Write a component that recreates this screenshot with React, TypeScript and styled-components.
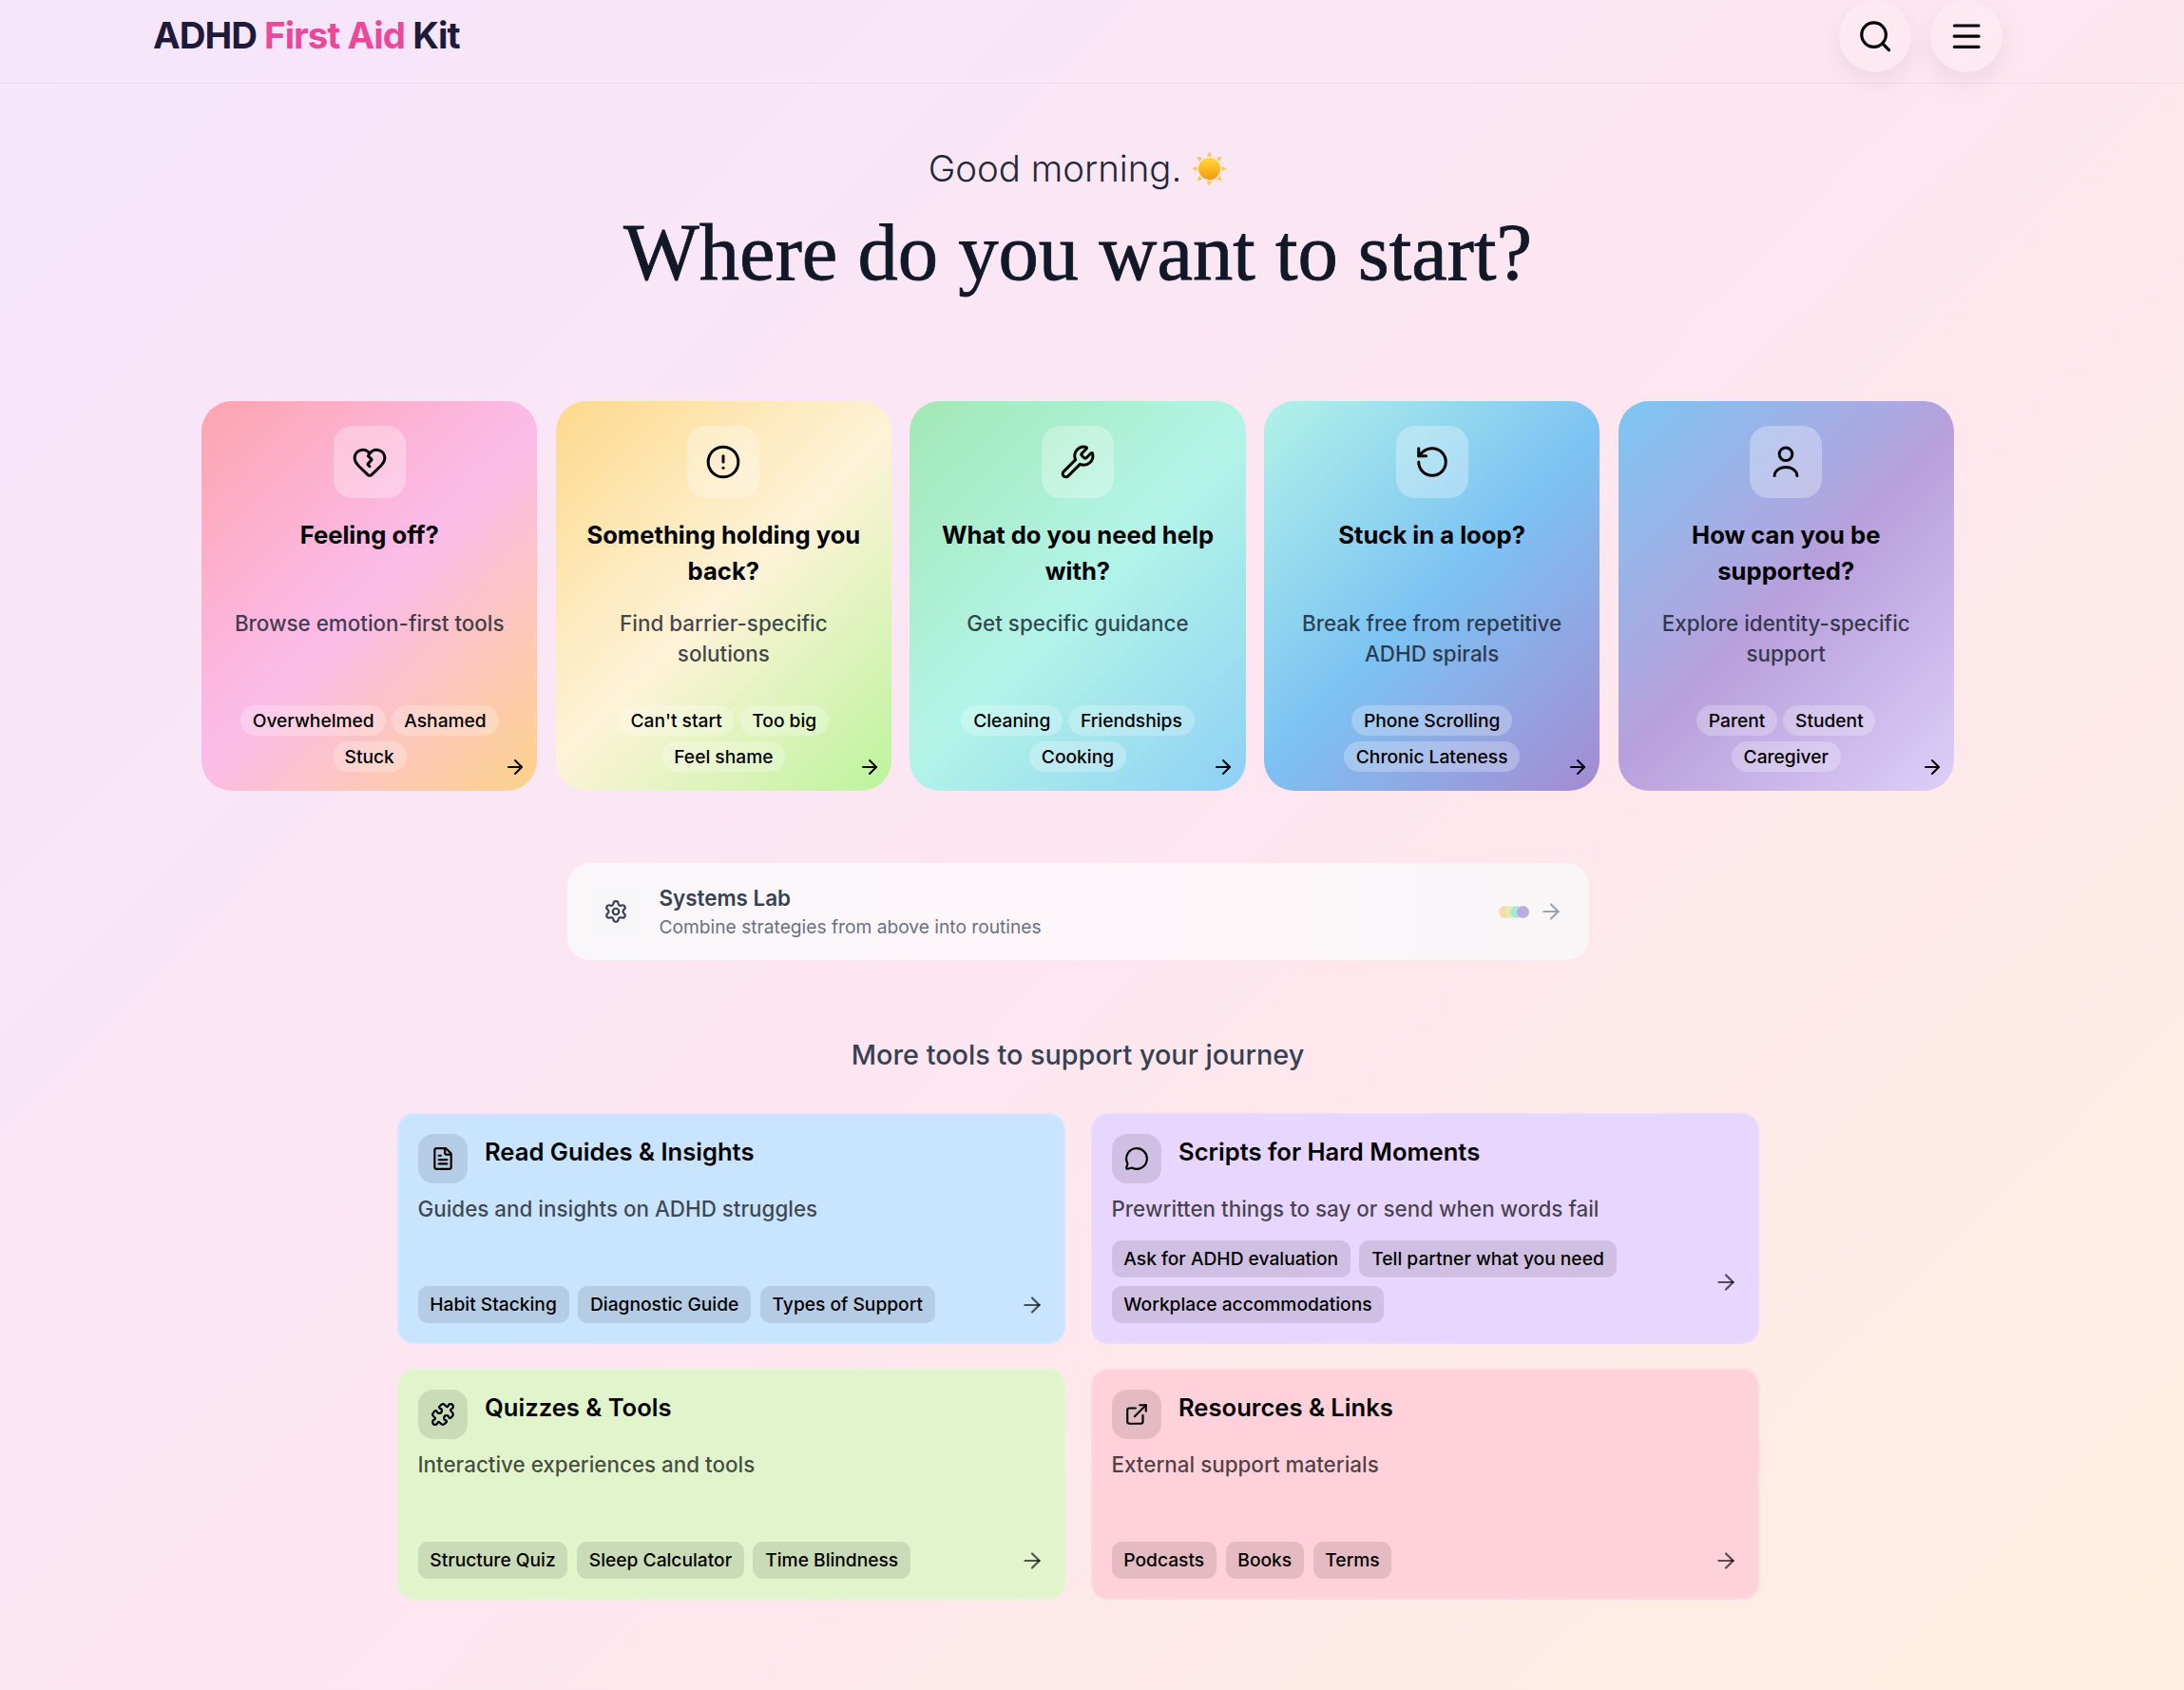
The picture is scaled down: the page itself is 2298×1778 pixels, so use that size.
import React from "react";
import styled, { createGlobalStyle } from "styled-components";
import {
  ArrowRight, CircleAlert, ExternalLink, FileText, HeartCrack, Menu, MessageCircle,
  Puzzle, RotateCcw, Search, Settings, Wrench,
} from "lucide-react";

const Global = createGlobalStyle`
  html, body { margin: 0; padding: 0; }
  body { font-family: Inter, "Liberation Sans", sans-serif; color: #000; }
  * { box-sizing: border-box; }
`;

const Page = styled.div`
  min-height: 1778px;
  padding-right: 30px;
  background: linear-gradient(135deg, #f5e6fb 0%, #fde6f1 50%, #ffeedf 100%);
`;
const Nav = styled.header`
  height: 88px;
  padding: 0 161px 11px;
  display: flex;
  align-items: center;
  justify-content: space-between;
  margin-right: -30px;
  padding-right: 191px;
  border-bottom: 1px solid rgba(0, 0, 0, 0.04);
`;
const Logo = styled.div`
  margin-top: -2px;
  font-size: 38.4px;
  font-weight: 700;
  letter-spacing: -0.96px;
  color: #1e1b3a;
`;
const Pink = styled.span`color: #ec4899;`;
const NavActions = styled.div`display: flex; gap: 20px;`;
const RoundButton = styled.button`
  width: 76px;
  height: 76px;
  border: 0;
  padding: 0;
  border-radius: 50%;
  display: flex;
  align-items: center;
  justify-content: center;
  color: #000;
  background: rgba(255, 255, 255, 0.12);
  box-shadow: 0 10px 24px rgba(60, 20, 70, 0.07);
`;
const Hero = styled.section`
  padding-top: 64px;
  text-align: center;
`;
const Greeting = styled.p`
  margin: 0;
  height: 50px;
  display: flex;
  align-items: center;
  justify-content: center;
  gap: 11px;
  font-size: 38.4px;
  font-weight: 300;
  color: #1f2937;
`;
const Heading = styled.h1`
  margin: 19px 0 0;
  font-family: "Liberation Serif", serif;
  font-size: 84.6px;
  line-height: 90px;
  font-weight: 400;
  color: #111827;
  -webkit-text-stroke: 0.8px #111827;
`;
const CardRow = styled.div`
  width: 1844px;
  margin: 111px auto 0;
  display: grid;
  grid-template-columns: repeat(5, 1fr);
  gap: 19.2px;
`;
const Card = styled.article<{ $bg: string }>`
  position: relative;
  height: 410px;
  padding: 26px 24px 20px;
  border-radius: 32px;
  display: flex;
  flex-direction: column;
  align-items: center;
  text-align: center;
  background: ${(p) => p.$bg};
`;
const CardIcon = styled.div`
  width: 76px;
  height: 76px;
  flex: none;
  border-radius: 20px;
  display: flex;
  align-items: center;
  justify-content: center;
  background: rgba(255, 255, 255, 0.3);
`;
const CardTitle = styled.h2`
  margin: 20px 0 0;
  min-height: 76px;
  font-size: 25.6px;
  line-height: 38px;
  font-weight: 700;
  color: #000;
`;
const CardDesc = styled.p`
  margin: 20px 0 0;
  font-size: 22.4px;
  line-height: 32px;
  font-weight: 500;
  color: rgba(17, 24, 39, 0.8);
`;
const Pills = styled.div`
  margin-top: auto;
  display: flex;
  flex-wrap: wrap;
  justify-content: center;
  gap: 6px;
`;
const Pill = styled.span`
  height: 32px;
  padding: 0 12.8px;
  border-radius: 16px;
  font-size: 19.2px;
  line-height: 32px;
  font-weight: 500;
  color: #000;
  background: rgba(255, 255, 255, 0.25);
`;
const CardArrow = styled.span`
  position: absolute;
  right: 11.5px;
  bottom: 13px;
  display: flex;
`;
const Lab = styled.section`
  width: 1075px;
  height: 102px;
  margin: 76px auto 0;
  padding: 0 27px 0 25px;
  display: flex;
  align-items: center;
  border-radius: 24px;
  background: linear-gradient(90deg, #f9f7fa 0%, #fdf6fa 40%, #fcf6f9 70%, #f9f6f8 100%);
`;
const LabIcon = styled.div`
  width: 52px;
  height: 52px;
  margin-right: 20px;
  border-radius: 14px;
  display: flex;
  align-items: center;
  justify-content: center;
  color: #374151;
  background: rgba(243, 244, 246, 0.4);
`;
const LabText = styled.div`flex: 1;`;
const LabTitle = styled.div`
  font-size: 22.4px;
  line-height: 33px;
  font-weight: 600;
  color: #374151;
`;
const LabSub = styled.div`
  font-size: 19.2px;
  line-height: 29px;
  color: #6b7280;
`;
const Dots = styled.div`
  display: flex;
  margin-right: 10px;
`;
const Dot = styled.span<{ $c: string }>`
  width: 13px;
  height: 13px;
  margin-left: -6.7px;
  border-radius: 50%;
  background: ${(p) => p.$c};
  opacity: 0.9;
`;
const LabArrow = styled.span`
  display: flex;
  color: #9ca3af;
`;
const MoreTitle = styled.h3`
  margin: 78px 0 0;
  text-align: center;
  font-size: 28.8px;
  line-height: 44px;
  font-weight: 500;
  color: #374151;
`;
const ToolGrid = styled.div`
  width: 1433px;
  margin: 39px auto 0;
  display: grid;
  grid-template-columns: repeat(2, 1fr);
  gap: 26px 27px;
`;
const Tool = styled.article<{ $bg: string }>`
  height: 243px;
  padding: 20px;
  border: 2px solid rgba(255, 255, 255, 0.14);
  border-radius: 18px;
  display: flex;
  flex-direction: column;
  background: ${(p) => p.$bg};
`;
const ToolHead = styled.div`
  display: flex;
  align-items: flex-start;
  gap: 18.5px;
`;
const ToolIcon = styled.div`
  width: 52px;
  height: 52px;
  flex: none;
  border-radius: 16px;
  display: flex;
  align-items: center;
  justify-content: center;
  background: rgba(0, 0, 0, 0.1);
`;
const ToolTitle = styled.h4`
  margin: 0;
  font-size: 25.6px;
  line-height: 38px;
  font-weight: 600;
  color: #000;
`;
const ToolDesc = styled.p`
  margin: 11px 0 0;
  font-size: 22.4px;
  line-height: 32px;
  font-weight: 500;
  color: rgba(0, 0, 0, 0.7);
`;
const ToolFoot = styled.div`
  margin-top: auto;
  display: flex;
  align-items: center;
  justify-content: space-between;
`;
const Tags = styled.div`
  display: flex;
  flex-wrap: wrap;
  gap: 9px 9.6px;
  max-width: 590px;
`;
const Tag = styled.span`
  height: 39px;
  padding: 0 12.8px;
  border-radius: 10px;
  font-size: 19.2px;
  line-height: 39px;
  font-weight: 500;
  color: #000;
  background: rgba(0, 0, 0, 0.1);
`;
const ToolArrow = styled.span`
  display: flex;
  margin-right: 0;
  color: rgba(0, 0, 0, 0.65);
`;

function PersonIcon({ size }: { size: number }) {
  return (
    <svg width={size} height={size} viewBox="0 0 24 24" fill="none" stroke="currentColor" strokeWidth="1.9" strokeLinecap="round" aria-hidden="true">
      <circle cx="12" cy="6.8" r="4.3" />
      <path d="M4.5 21.2a7.5 5.8 0 0 1 15 0" />
    </svg>
  );
}

const cards = [
  { Icon: HeartCrack, title: "Feeling off?", desc: "Browse emotion-first tools", tags: ["Overwhelmed", "Ashamed", "Stuck"], bg: "linear-gradient(135deg, #fda4af 0%, #fbbcea 50%, #fdd28a 100%)" },
  { Icon: CircleAlert, title: "Something holding you back?", desc: "Find barrier-specific solutions", tags: ["Can't start", "Too big", "Feel shame"], bg: "linear-gradient(135deg, #fcd98b 0%, #fef3d8 50%, #bbf49c 100%)" },
  { Icon: Wrench, title: "What do you need help with?", desc: "Get specific guidance", tags: ["Cleaning", "Friendships", "Cooking"], bg: "linear-gradient(135deg, #a3e8b4 0%, #b3f4e8 50%, #8fd0f5 100%)" },
  { Icon: RotateCcw, title: "Stuck in a loop?", desc: "Break free from repetitive ADHD spirals", tags: ["Phone Scrolling", "Chronic Lateness"], bg: "linear-gradient(135deg, #b2f2e8 0%, #7cc3f3 50%, #a58ad2 100%)" },
  { Icon: PersonIcon, title: "How can you be supported?", desc: "Explore identity-specific support", tags: ["Parent", "Student", "Caregiver"], bg: "linear-gradient(135deg, #7cc6f3 0%, #b8a0dc 50%, #dccff8 100%)" },
];
const tools = [
  { Icon: FileText, title: "Read Guides & Insights", desc: "Guides and insights on ADHD struggles", tags: ["Habit Stacking", "Diagnostic Guide", "Types of Support"], bg: "#c9e4fe" },
  { Icon: MessageCircle, title: "Scripts for Hard Moments", desc: "Prewritten things to say or send when words fail", tags: ["Ask for ADHD evaluation", "Tell partner what you need", "Workplace accommodations"], bg: "#e7d6fd" },
  { Icon: Puzzle, title: "Quizzes & Tools", desc: "Interactive experiences and tools", tags: ["Structure Quiz", "Sleep Calculator", "Time Blindness"], bg: "#e1f4cc" },
  { Icon: ExternalLink, title: "Resources & Links", desc: "External support materials", tags: ["Podcasts", "Books", "Terms"], bg: "#ffd1da" },
];
const dots = ["#fcd5a5", "#dcf3a8", "#a5e5dc", "#b9a4e0"];

function Sun() {
  const rays = [0, 45, 90, 135, 180, 225, 270, 315];
  return (
    <svg width="37" height="37" viewBox="0 0 37 37" aria-hidden="true">
      <defs>
        <linearGradient id="sun" x1="0" y1="0" x2="0" y2="1">
          <stop offset="0" stopColor="#ffd83a" />
          <stop offset="1" stopColor="#f79a0c" />
        </linearGradient>
      </defs>
      {rays.map((r) => (
        <polygon key={r} points="18.5,0 21,5.5 16,5.5" fill="#fdc644" transform={`rotate(${r} 18.5 18.5)`} />
      ))}
      <circle cx="18.5" cy="18.5" r="11.5" fill="url(#sun)" />
    </svg>
  );
}

export default function App() {
  return (
    <Page>
      <Global />
      <Nav>
        <Logo>ADHD <Pink>First Aid</Pink> Kit</Logo>
        <NavActions>
          <RoundButton aria-label="Search"><Search size={38.4} /></RoundButton>
          <RoundButton aria-label="Menu"><Menu size={38.4} /></RoundButton>
        </NavActions>
      </Nav>
      <Hero>
        <Greeting>Good morning. <Sun /></Greeting>
        <Heading>Where do you want to start?</Heading>
      </Hero>
      <CardRow>
        {cards.map(({ Icon, title, desc, tags, bg }) => (
          <Card key={title} $bg={bg}>
            <CardIcon><Icon size={38} strokeWidth={1.9} /></CardIcon>
            <CardTitle>{title}</CardTitle>
            <CardDesc>{desc}</CardDesc>
            <Pills>{tags.map((t) => <Pill key={t}>{t}</Pill>)}</Pills>
            <CardArrow><ArrowRight size={24} /></CardArrow>
          </Card>
        ))}
      </CardRow>
      <Lab>
        <LabIcon><Settings size={26} /></LabIcon>
        <LabText>
          <LabTitle>Systems Lab</LabTitle>
          <LabSub>Combine strategies from above into routines</LabSub>
        </LabText>
        <Dots>{dots.map((c) => <Dot key={c} $c={c} />)}</Dots>
        <LabArrow><ArrowRight size={26} /></LabArrow>
      </Lab>
      <MoreTitle>More tools to support your journey</MoreTitle>
      <ToolGrid>
        {tools.map(({ Icon, title, desc, tags, bg }) => (
          <Tool key={title} $bg={bg}>
            <ToolHead>
              <ToolIcon><Icon size={26} /></ToolIcon>
              <ToolTitle>{title}</ToolTitle>
            </ToolHead>
            <ToolDesc>{desc}</ToolDesc>
            <ToolFoot>
              <Tags>{tags.map((t) => <Tag key={t}>{t}</Tag>)}</Tags>
              <ToolArrow><ArrowRight size={26} /></ToolArrow>
            </ToolFoot>
          </Tool>
        ))}
      </ToolGrid>
    </Page>
  );
}
